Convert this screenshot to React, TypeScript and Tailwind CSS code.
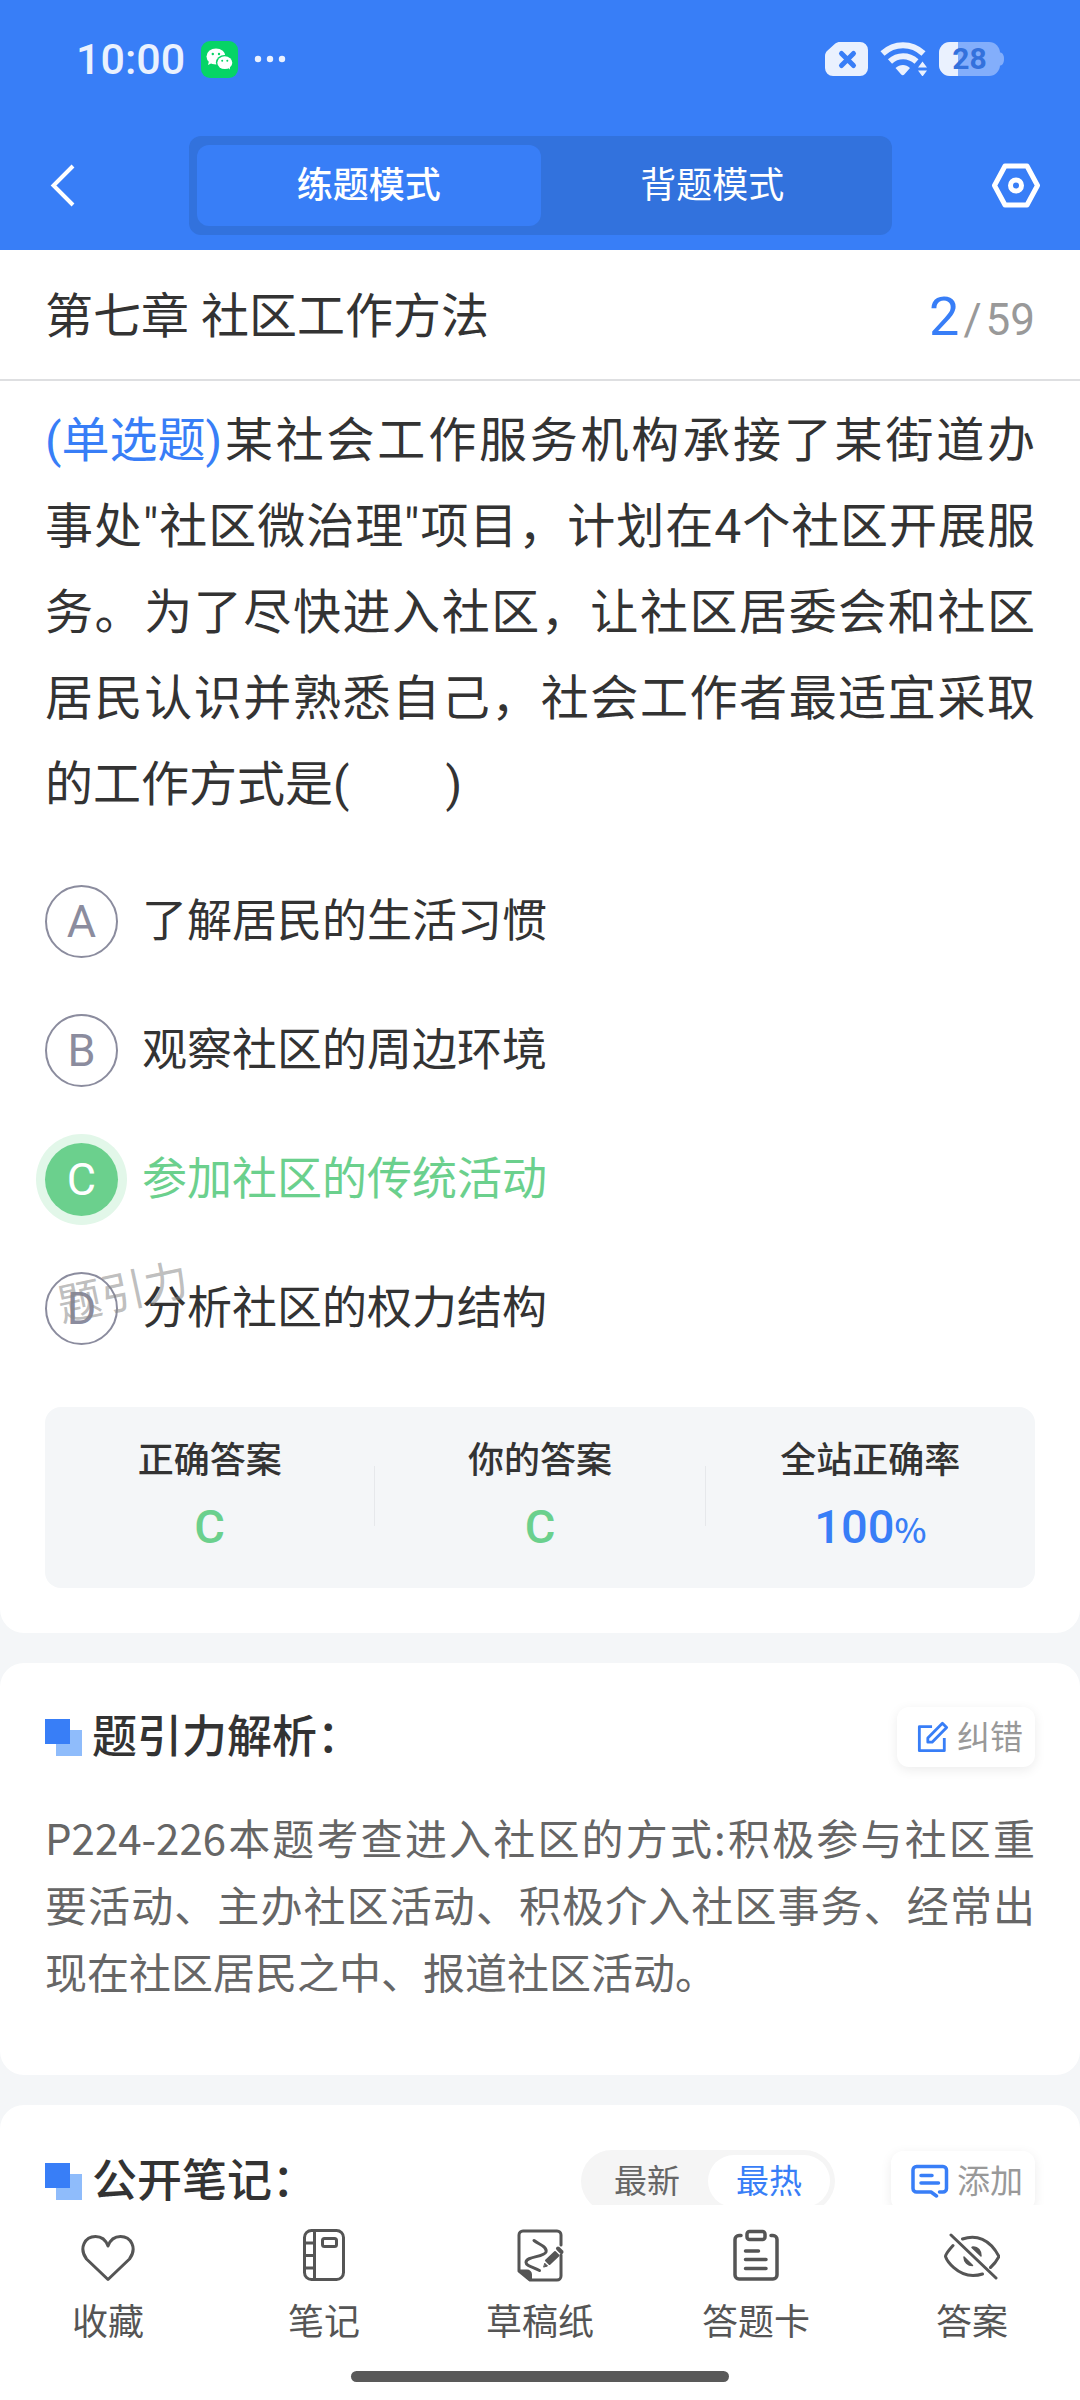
import { useState } from "react";
import type { ReactNode } from "react";
import clsx from "clsx";

const OPTIONS = [
  { key: "A", text: "了解居民的生活习惯" },
  { key: "B", text: "观察社区的周边环境" },
  { key: "C", text: "参加社区的传统活动" },
  { key: "D", text: "分析社区的权力结构" },
];

const ANSWER = "C";

function WechatBadge() {
  return (
    <svg width="37" height="37" viewBox="0 0 37 37" aria-hidden="true">
      <rect width="37" height="37" rx="9" fill="#06d466" />
      <path d="M8 20l-1 4 4-2z" fill="#fff" />
      <ellipse cx="15" cy="15.500" rx="9.500" ry="8" fill="#fff" />
      <ellipse cx="23.500" cy="21.500" rx="8.600" ry="7.400" fill="#06d466" />
      <ellipse cx="23.800" cy="21.700" rx="7.500" ry="6.400" fill="#fff" />
      <path d="M26 26l3 2.500-.5-4z" fill="#fff" />
      <g fill="#06d466">
        <circle cx="11.800" cy="13" r="1.200" />
        <circle cx="18" cy="13" r="1.200" />
        <circle cx="21.200" cy="19.700" r="1" />
        <circle cx="26.300" cy="19.700" r="1" />
      </g>
    </svg>
  );
}

function StatusBar() {
  return (
    <div className="flex h-[118px] items-center justify-between px-[76px] text-[#eaf1fe]">
      <div className="flex items-center">
        <span className="text-[43px] leading-none font-medium">10:00</span>
        <span className="ml-4">
          <WechatBadge />
        </span>
        <svg className="ml-4" width="32" height="8" viewBox="0 0 32 8" fill="currentColor" aria-hidden="true">
          <circle cx="4" cy="4" r="3.200" />
          <circle cx="16" cy="4" r="3.200" />
          <circle cx="28" cy="4" r="3.200" />
        </svg>
      </div>
      <div className="flex items-center">
        <svg width="43" height="34" viewBox="0 0 43 34" aria-hidden="true">
          <path
            d="M15 0H35a8 8 0 0 1 8 8V26a8 8 0 0 1-8 8H8a8 8 0 0 1-8-8V14c0-2 .8-4 2.300-5.300L10 1.800C11.500.6 13 0 15 0z"
            fill="currentColor"
          />
          <path d="M16.500 11.500l12 12M28.500 11.500l-12 12" stroke="#387ef7" strokeWidth="5" strokeLinecap="round" />
        </svg>
        <svg className="ml-3" width="47" height="34" viewBox="0 0 47 34" fill="none" aria-hidden="true">
          <path d="M2.500 11.500C14.500.5 31.500.5 43.500 11.500" stroke="currentColor" strokeWidth="6" />
          <path d="M10 19.500C17.500 12.500 28.500 12.500 36.500 19.500" stroke="currentColor" strokeWidth="6" />
          <path d="M15.500 26C20 22 26 22 30 26L24.500 32.300c-1 1.200-2.500 1.200-3.500 0z" fill="currentColor" />
          <path d="M42.500 17l7 9-7 9-7-9z" fill="#387ef7" />
          <path d="M42.500 19.500l4.500 6h-9zM42.500 34.500l4.500-6h-9z" fill="currentColor" />
        </svg>
        <div className="relative ml-3 flex h-[34px] w-[65px] items-center">
          <svg className="absolute inset-0" width="65" height="34" viewBox="0 0 65 34" aria-hidden="true">
            <rect width="61" height="34" rx="11" fill="#83aefb" />
            <path d="M61 10.500c2.500 0 4 2.500 4 6.500s-1.500 6.500-4 6.500z" fill="#83aefb" />
            <path d="M11 0h8v34h-8A11 11 0 0 1 0 23V11A11 11 0 0 1 11 0z" fill="currentColor" />
          </svg>
          <span className="relative w-[61px] text-center text-[30px] leading-none font-bold text-[#3371dc]">28</span>
        </div>
      </div>
    </div>
  );
}

function SectionTitle({ children }: { children: ReactNode }) {
  return (
    <h2 className="flex items-center gap-[10px] text-[45px] leading-none font-medium whitespace-nowrap">
      <svg width="37" height="37" viewBox="0 0 37 37" aria-hidden="true">
        <rect x="11" y="11" width="26" height="26" fill="#8fbcfb" />
        <rect width="25" height="25" fill="#387ef7" />
      </svg>
      {children}
    </h2>
  );
}

function SmallButton({ icon, label }: { icon: ReactNode; label: string }) {
  return (
    <button
      type="button"
      className="flex h-[60px] items-center gap-2 rounded-xl bg-white pr-3 pl-5 text-[33px] leading-none text-[#999] shadow-[0_3px_12px_rgba(0,0,0,0.08)]"
    >
      {icon}
      {label}
    </button>
  );
}

function Stat({ label, children }: { label: string; children: ReactNode }) {
  return (
    <div className="flex flex-1 flex-col items-center">
      <dt className="text-[36px] leading-[52px] font-medium">{label}</dt>
      <dd className="mt-[10px] flex h-[60px] items-baseline text-[47px] leading-[60px] font-medium">{children}</dd>
    </div>
  );
}

const iconProps = {
  width: 56,
  height: 56,
  viewBox: "0 0 56 56",
  fill: "none",
  stroke: "#555",
  strokeWidth: 3,
  strokeLinecap: "round",
  strokeLinejoin: "round",
  "aria-hidden": true,
} as const;

const NAV = [
  {
    label: "收藏",
    icon: (
      <svg {...iconProps}>
        <path d="M28 52.500L6.500 32C-1.500 21 5 9.500 15.500 9.500c6 0 10.500 4 12.500 9.500 2-5.500 6.500-9.500 12.500-9.500 10.500 0 17 11.500 9 22.500z" />
      </svg>
    ),
  },
  {
    label: "笔记",
    icon: (
      <svg {...iconProps}>
        <rect x="8.500" y="3.500" width="39" height="49" rx="7" />
        <path d="M18.500 4v48M9 16h9M9 28.500h9M9 41h9" />
        <rect x="26.500" y="11.500" width="14" height="8" rx="2" />
      </svg>
    ),
  },
  {
    label: "草稿纸",
    icon: (
      <svg {...iconProps}>
        <path d="M49 18V8a4 4 0 0 0-4-4H11a4 4 0 0 0-4 4v36l11 9h27a4 4 0 0 0 4-4V28" />
        <path d="M7.500 43.500h7.500a4 4 0 0 1 4 4v5.500z" fill="#555" strokeWidth="2" />
        <path d="M22 13.500c5 4 13.500 6 12 11.500-2 5.500-20 4-20 10.500 0 3.500 8 5 13.500 8" />
        <path d="M46 21.500l3.500 3.500" strokeWidth="4" />
        <path d="M43 25l3.500 3.500-9 8.500-3.500-3.500z" fill="#555" strokeWidth="2" />
        <path d="M33 36.500l2.500 2.500-3.500 1z" fill="#555" strokeWidth="1" />
      </svg>
    ),
  },
  {
    label: "答题卡",
    icon: (
      <svg {...iconProps} strokeWidth="3.500">
        <path d="M13 8.500h-2a4 4 0 0 0-4 4V48a4 4 0 0 0 4 4h34a4 4 0 0 0 4-4V12.500a4 4 0 0 0-4-4h-2" />
        <rect x="19" y="4.500" width="18" height="8" rx="2.500" />
        <path d="M17.500 24h13M17.500 32.500h20.500M17.500 41.500h20.500" />
      </svg>
    ),
  },
  {
    label: "答案",
    icon: (
      <svg {...iconProps}>
        <path d="M7 8l45 43M9 18.500C4.500 23.500 1.500 28 1.500 29.500 3 34 13 48.500 29 48.500c3.500 0 6.500-.5 9.500-1.500M18.500 12C32 7 46 12 55 29.500c-2 4-5 8-8.500 11" />
        <path d="M29 20c5 0 8.500 4.500 8 9l-9-8.500zM20 30c0 5 4 8.500 8.500 8.500z" fill="#555" strokeWidth="1.500" />
      </svg>
    ),
  },
];

export default function App() {
  const [mode, setMode] = useState("practice");
  const [choice, setChoice] = useState(ANSWER);
  const [sort, setSort] = useState("hot");

  return (
    <div className="flex h-screen flex-col overflow-hidden bg-[#f4f6f8] font-[Roboto,'Noto_Sans_CJK_SC',sans-serif] text-[#333]">
      <header className="shrink-0 bg-[#387ef7] text-white">
        <StatusBar />
        <div className="grid grid-cols-[189px_1fr_188px] items-center pt-[18px] pb-[15px]">
          <button type="button" aria-label="返回" className="justify-self-start pl-[50px]">
            <svg width="26" height="44" viewBox="0 0 26 44" fill="none" stroke="currentColor" strokeWidth="4" aria-hidden="true">
              <path d="M23 2L3.500 21.500 23 41" />
            </svg>
          </button>
          <div className="flex h-[99px] rounded-xl bg-[#3272dd] px-2 py-[9px] text-[36px]">
            <button
              type="button"
              onClick={() => setMode("practice")}
              className={clsx("flex-1 rounded-xl", mode === "practice" && "bg-[#387ef7] font-medium")}
            >
              练题模式
            </button>
            <button
              type="button"
              onClick={() => setMode("recite")}
              className={clsx("flex-1 rounded-xl", mode === "recite" && "bg-[#387ef7] font-medium")}
            >
              背题模式
            </button>
          </div>
          <button type="button" aria-label="设置" className="justify-self-end pr-[39px]">
            <svg width="50" height="46" viewBox="0 0 50 46" fill="none" stroke="currentColor" strokeWidth="5" strokeLinejoin="round" aria-hidden="true">
              <path d="M14 3h22l10.500 19.500L36 42H14L3.500 22.500z" />
              <circle cx="25" cy="22.500" r="5.500" />
            </svg>
          </button>
        </div>
      </header>

      <div className="flex h-[131px] shrink-0 items-center justify-between border-b-2 border-[#dedfe1] bg-white px-[45px] pt-1">
        <h1 className="text-[48px] leading-none">第七章 社区工作方法</h1>
        <p className="flex items-baseline text-[44px] leading-none text-[#999]">
          <span className="text-[54px] text-[#387ef7]">2</span>
          <span className="mx-1">/</span>
          59
        </p>
      </div>

      <main className="flex min-h-0 flex-1 flex-col gap-[30px] overflow-y-auto [scrollbar-width:none]">
        <section className="shrink-0 rounded-b-3xl bg-white px-[45px] pt-[17px] pb-[45px]">
          <p className="text-justify text-[48px] leading-[86px]">
            <span className="inline-block text-[#387ef7]">(单选题)</span>
            某社会工作服务机构承接了某街道办事处"社区微治理"项目，计划在4个社区开展服务。为了尽快进入社区，让社区居委会和社区居民认识并熟悉自己，社会工作者最适宜采取的工作方式是(　　)
          </p>

          <div role="radiogroup" aria-label="选项" className="relative mt-[57px] flex flex-col items-start gap-[56px]">
            {OPTIONS.map((o) => {
              const right = choice === o.key && o.key === ANSWER;
              return (
                <label key={o.key} className="relative flex items-center gap-6 text-[45px] leading-[73px]">
                  <input
                    type="radio"
                    name="option"
                    className="sr-only"
                    checked={choice === o.key}
                    onChange={() => setChoice(o.key)}
                  />
                  <span
                    className={clsx(
                      "flex size-[73px] items-center justify-center rounded-full",
                      right ? "bg-[#6bd08d] text-white ring-[9px] ring-[#e2f7e9]" : "border-2 border-[#8b8c9e] text-[#8b8c9e]",
                    )}
                  >
                    {o.key}
                  </span>
                  <span className={clsx(right && "text-[#6bd08d]")}>{o.text}</span>
                </label>
              );
            })}
            {/* floating brand watermark */}
            <span className="pointer-events-none absolute bottom-6 left-3 -rotate-12 text-[44px] leading-[56px] text-[#888]/55">
              题引力
            </span>
          </div>

          <dl className="mt-[62px] flex items-center rounded-2xl bg-[#f4f6f8] pt-7 pb-[31px]">
            <Stat label="正确答案">
              <span className="text-[#6bd08d]">{ANSWER}</span>
            </Stat>
            <div className="h-[60px] w-px bg-[#e6e8eb]" />
            <Stat label="你的答案">
              <span className="text-[#6bd08d]">{choice}</span>
            </Stat>
            <div className="h-[60px] w-px bg-[#e6e8eb]" />
            <Stat label="全站正确率">
              <span className="text-[#387ef7]">100</span>
              <span className="font-['Noto_Sans_CJK_SC',sans-serif] text-[34px] leading-none text-[#387ef7]">%</span>
            </Stat>
          </dl>
        </section>

        <section className="shrink-0 rounded-3xl bg-white px-[45px] pt-11 pb-[71px]">
          <div className="flex items-center justify-between">
            <SectionTitle>题引力解析：</SectionTitle>
            <SmallButton
              label="纠错"
              icon={
                <svg width="32" height="32" viewBox="0 0 34 34" fill="none" stroke="#387ef7" strokeWidth="3" strokeLinejoin="round" aria-hidden="true">
                  <path d="M16 6H2.500v25.500H29V18" />
                  <path d="M27 2.500l4.500 4.500-15.500 15.500h-4.500V18z" />
                </svg>
              }
            />
          </div>
          <p className="mt-9 text-justify font-['Noto_Sans_CJK_SC',sans-serif] text-[42px] leading-[67px] text-[#666]">
            P224-226本题考查进入社区的方式:积极参与社区重要活动、主办社区活动、积极介入社区事务、经常出现在社区居民之中、报道社区活动。
          </p>
        </section>

        <section className="shrink-0 rounded-t-3xl bg-white px-[45px] pt-[45px] pb-10">
          <div className="flex items-center">
            <SectionTitle>公开笔记：</SectionTitle>
            <div className="mr-[56px] ml-auto flex rounded-full bg-[#f5f5f5] p-[5px] text-[33px] leading-none text-[#666]">
              <button
                type="button"
                onClick={() => setSort("new")}
                className={clsx("h-[52px] w-[122px] rounded-full", sort === "new" && "bg-white text-[#387ef7]")}
              >
                最新
              </button>
              <button
                type="button"
                onClick={() => setSort("hot")}
                className={clsx("h-[52px] w-[122px] rounded-full", sort === "hot" && "bg-white text-[#387ef7]")}
              >
                最热
              </button>
            </div>
            <SmallButton
              label="添加"
              icon={
                <svg width="38" height="34" viewBox="0 0 38 34" fill="none" stroke="#387ef7" strokeWidth="3.500" strokeLinecap="round" aria-hidden="true">
                  <path d="M28.500 28H32a3.500 3.500 0 0 0 3.500-3.500V6A3.500 3.500 0 0 0 32 2.500H5.500A3.500 3.500 0 0 0 2 6v18.500A3.500 3.500 0 0 0 5.500 28H20l5.500 4" strokeLinejoin="round" />
                  <path d="M10 11.500h11M10 19h17.500" />
                </svg>
              }
            />
          </div>
        </section>
      </main>

      <nav className="flex shrink-0 flex-col items-center bg-white pt-[22px] pb-[18px]">
        <ul className="grid w-full grid-cols-5">
          {NAV.map((n) => (
            <li key={n.label}>
              <button type="button" className="flex w-full flex-col items-center text-[36px] leading-[52px] text-[#555]">
                {n.icon}
                <span className="mt-[14px]">{n.label}</span>
              </button>
            </li>
          ))}
        </ul>
        <div className="mt-[22px] h-[11px] w-[35%] rounded-full bg-[#595959]" />
      </nav>
    </div>
  );
}
